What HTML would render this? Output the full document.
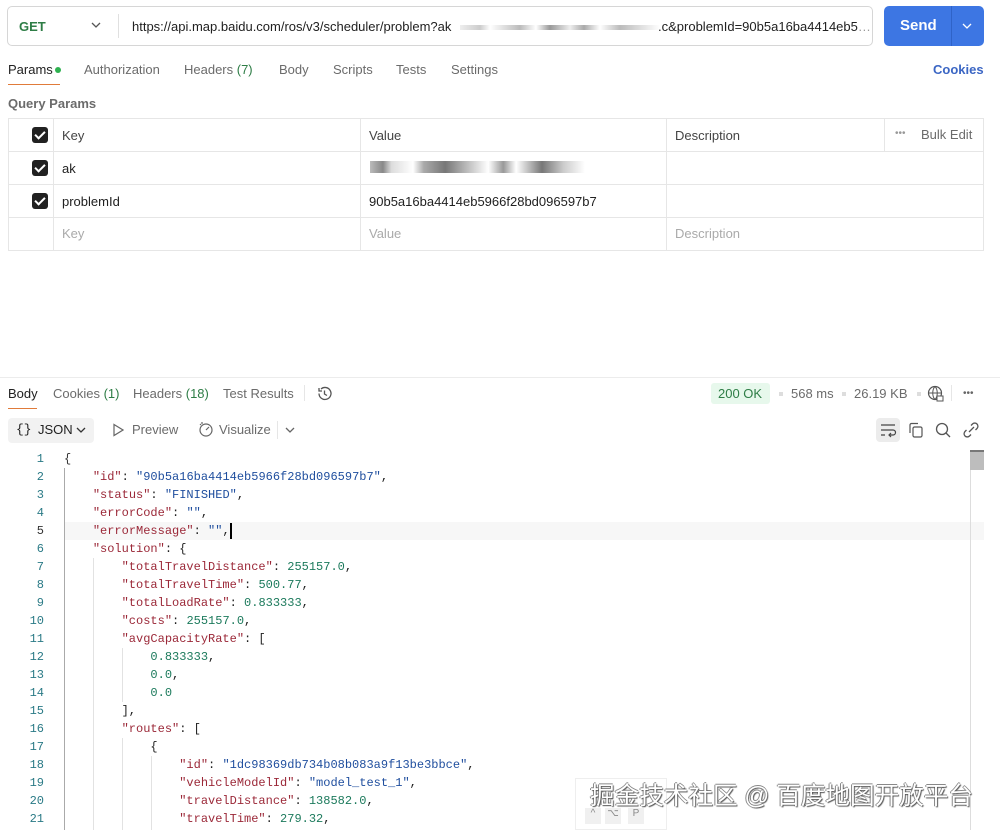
<!DOCTYPE html>
<html><head><meta charset="utf-8"><style>
*{margin:0;padding:0;box-sizing:border-box}
body{width:1000px;height:830px;overflow:hidden;background:#fff;font-family:"Liberation Sans",sans-serif;font-size:13px;color:#212121;position:relative}
.a{position:absolute;white-space:nowrap}
.g{color:#6b6b6b}
.tabs span{position:absolute;top:62px;color:#6b6b6b}
.cb{position:absolute;left:32px;width:16px;height:16px;background:#212121;border-radius:3px}
.cb:after{content:"";position:absolute;left:5px;top:2px;width:4px;height:8px;border:solid #fff;border-width:0 2px 2px 0;transform:rotate(45deg)}
.code{position:absolute;left:0;top:450px;font-family:"Liberation Mono",monospace;font-size:12px;line-height:18px}
.ln{position:absolute;left:0;width:44px;text-align:right;color:#2a7a86}
.l{position:absolute;left:64px;white-space:pre}
.k{color:#9b2838}.s{color:#1f4e9e}.n{color:#1c7a5c}.p{color:#333}
.guide{position:absolute;width:1px;background:#e2e2e2}
</style></head><body>
<div class="a" style="left:7px;top:6px;width:866px;height:40px;border:1px solid #d6d6d6;border-radius:5px"></div>
<div class="a" style="left:19px;top:19px;font-weight:bold;color:#2e7d46;font-size:13px">GET</div>
<svg class="a" style="left:90px;top:21px" width="12" height="8"><path d="M2 2l4 4 4-4" fill="none" stroke="#555" stroke-width="1.3"/></svg>
<div class="a" style="left:118px;top:14px;width:1px;height:24px;background:#e0e0e0"></div>
<div class="a" style="left:132px;top:19px;color:#212121">https://api.map.baidu.com/ros/v3/scheduler/problem?ak</div>
<div class="a" style="left:460px;top:25px;width:200px;height:5px;background:linear-gradient(90deg,#eee 0,#ccc 10%,#fff 15%,#bbb 30%,#fff 38%,#999 45%,#eee 55%,#aaa 62%,#fff 70%,#bbb 80%,#fff 100%)"></div>
<div class="a" style="left:658px;top:19px">.c&amp;problemId=90b5a16ba4414eb5<span style="color:#999">…</span></div>
<div class="a" style="left:884px;top:6px;width:100px;height:40px;background:#3d76e3;border-radius:5px"></div>
<div class="a" style="left:951px;top:6px;width:1px;height:40px;background:#2f63c8"></div>
<div class="a" style="left:900px;top:17px;color:#fff;font-weight:bold;font-size:15px">Send</div>
<svg class="a" style="left:961px;top:22px" width="12" height="8"><path d="M2 2l4 4 4-4" fill="none" stroke="#fff" stroke-width="1.3"/></svg>
<div class="tabs">
<span style="left:8px;color:#212121">Params</span>
<span style="left:84px">Authorization</span>
<span style="left:184px">Headers <span style="position:static;color:#2e7d46">(7)</span></span>
<span style="left:279px">Body</span>
<span style="left:333px">Scripts</span>
<span style="left:396px">Tests</span>
<span style="left:451px">Settings</span>
<span style="left:933px;color:#3b66c4;font-weight:bold">Cookies</span>
</div>
<div class="a" style="left:55px;top:67px;width:6px;height:6px;border-radius:50%;background:#2eb150"></div>
<div class="a" style="left:8px;top:84px;width:52px;height:1px;background:#e07b3a"></div>
<div class="a" style="left:8px;top:96px;font-weight:bold;color:#6b6b6b">Query Params</div>
<div class="a" style="left:8px;top:118px;width:976px;height:133px;border:1px solid #e6e6e6"></div>
<div class="a" style="left:8px;top:151px;width:976px;height:1px;background:#e6e6e6"></div>
<div class="a" style="left:8px;top:184px;width:976px;height:1px;background:#e6e6e6"></div>
<div class="a" style="left:8px;top:217px;width:976px;height:1px;background:#e6e6e6"></div>
<div class="a" style="left:53px;top:118px;width:1px;height:133px;background:#e6e6e6"></div>
<div class="a" style="left:360px;top:118px;width:1px;height:133px;background:#e6e6e6"></div>
<div class="a" style="left:666px;top:118px;width:1px;height:133px;background:#e6e6e6"></div>
<div class="a" style="left:884px;top:118px;width:1px;height:33px;background:#e6e6e6"></div>
<div class="cb" style="top:127px"></div><div class="cb" style="top:160px"></div><div class="cb" style="top:193px"></div>
<div class="a" style="left:62px;top:128px;color:#444">Key</div>
<div class="a" style="left:369px;top:128px;color:#444">Value</div>
<div class="a" style="left:675px;top:128px;color:#444">Description</div>
<div class="a" style="left:895px;top:128px;color:#999;font-size:10px">•••</div>
<div class="a" style="left:921px;top:127px;color:#6b6b6b">Bulk Edit</div>
<div class="a" style="left:62px;top:161px">ak</div>
<div class="a" style="left:370px;top:161px;width:215px;height:12px;background:linear-gradient(90deg,#bbb 0,#888 6%,#ddd 10%,#fff 20%,#aaa 25%,#777 35%,#bbb 45%,#fff 55%,#999 62%,#fff 68%,#777 80%,#ccc 90%,#fff 100%)"></div>
<div class="a" style="left:62px;top:194px">problemId</div>
<div class="a" style="left:369px;top:194px">90b5a16ba4414eb5966f28bd096597b7</div>
<div class="a" style="left:62px;top:226px;color:#aaa">Key</div>
<div class="a" style="left:369px;top:226px;color:#aaa">Value</div>
<div class="a" style="left:675px;top:226px;color:#aaa">Description</div>
<div class="a" style="left:0;top:377px;width:1000px;height:1px;background:#ececec"></div>
<div class="a" style="left:8px;top:386px">Body</div>
<div class="a" style="left:8px;top:408px;width:29px;height:1px;background:#e07b3a"></div>
<div class="a g" style="left:53px;top:386px">Cookies <span style="color:#2e7d46">(1)</span></div>
<div class="a g" style="left:133px;top:386px">Headers <span style="color:#2e7d46">(18)</span></div>
<div class="a g" style="left:223px;top:386px">Test Results</div>
<div class="a" style="left:304px;top:385px;width:1px;height:16px;background:#e6e6e6"></div>
<svg class="a" style="left:316px;top:385px" width="17" height="17"><path d="M3 8.5a6 6 0 1 0 2-4.5M3 3v3h3M8.5 5.5v3.5l2.5 1.5" fill="none" stroke="#555" stroke-width="1.3"/></svg>
<div class="a" style="left:711px;top:383px;width:59px;height:21px;background:#e7f8ec;border-radius:3px"></div>
<div class="a" style="left:718px;top:386px;color:#2e7d46">200 OK</div>
<div class="a" style="left:779px;top:392px;width:4px;height:4px;background:#ddd"></div>
<div class="a g" style="left:791px;top:386px">568 ms</div>
<div class="a" style="left:842px;top:392px;width:4px;height:4px;background:#ddd"></div>
<div class="a g" style="left:854px;top:386px">26.19 KB</div>
<div class="a" style="left:917px;top:392px;width:4px;height:4px;background:#ddd"></div>
<svg class="a" style="left:927px;top:385px" width="18" height="18"><circle cx="8" cy="8" r="6.5" fill="none" stroke="#555" stroke-width="1.2"/><path d="M1.5 8h13M8 1.5c-3 3-3 10 0 13M8 1.5c3 3 3 10 0 13" fill="none" stroke="#555" stroke-width="1"/><rect x="10" y="11" width="6" height="5" fill="#fff" stroke="#555"/></svg>
<div class="a" style="left:951px;top:385px;width:1px;height:16px;background:#e6e6e6"></div>
<div class="a" style="left:963px;top:388px;color:#666;font-size:10px">•••</div>
<div class="a" style="left:8px;top:418px;width:86px;height:25px;background:#f2f2f2;border-radius:4px"></div>
<div class="a" style="left:16px;top:422px;font-family:'Liberation Mono',monospace">{}</div>
<div class="a" style="left:38px;top:422px">JSON</div>
<svg class="a" style="left:76px;top:427px" width="10" height="7"><path d="M1 1l4 4 4-4" fill="none" stroke="#333" stroke-width="1.3"/></svg>
<svg class="a" style="left:112px;top:423px" width="12" height="14"><path d="M2 1.5l9 5.5-9 5.5z" fill="none" stroke="#666" stroke-width="1.2"/></svg>
<div class="a g" style="left:132px;top:422px">Preview</div>
<svg class="a" style="left:197px;top:421px" width="17" height="17"><circle cx="9" cy="9" r="6" fill="none" stroke="#666" stroke-width="1.2"/><path d="M9 9l3-3M3 3l1 1M5 1v2" stroke="#666" stroke-width="1.2"/></svg>
<div class="a g" style="left:219px;top:422px">Visualize</div>
<div class="a" style="left:277px;top:421px;width:1px;height:18px;background:#e6e6e6"></div>
<svg class="a" style="left:285px;top:427px" width="10" height="7"><path d="M1 1l4 4 4-4" fill="none" stroke="#666" stroke-width="1.3"/></svg>
<div class="a" style="left:876px;top:418px;width:24px;height:24px;background:#ececec;border-radius:4px"></div>
<svg class="a" style="left:879px;top:421px" width="18" height="18"><path d="M2 4h14M2 9h12a2.5 2.5 0 0 1 0 5h-4M12 12l-2 2 2 2M2 14h4" fill="none" stroke="#444" stroke-width="1.2"/></svg>
<svg class="a" style="left:907px;top:421px" width="18" height="18"><rect x="6" y="6" width="9" height="10" rx="1.5" fill="none" stroke="#555" stroke-width="1.2"/><path d="M3 12V4a1.5 1.5 0 0 1 1.5-1.5H11" fill="none" stroke="#555" stroke-width="1.2"/></svg>
<svg class="a" style="left:934px;top:421px" width="18" height="18"><circle cx="8" cy="8" r="5.5" fill="none" stroke="#555" stroke-width="1.3"/><path d="M12 12l4 4" stroke="#555" stroke-width="1.3"/></svg>
<svg class="a" style="left:962px;top:421px" width="18" height="18"><path d="M7 11l5-5M9 4.5l1.5-1.5a3 3 0 0 1 4.5 4.5L13.5 9M4.5 9L3 10.5a3 3 0 0 0 4.5 4.5L9 13.5" fill="none" stroke="#555" stroke-width="1.3"/></svg>
<div class="a" style="left:64px;top:522px;width:920px;height:18px;background:#f7f7f7"></div>
<div class="a" style="left:970px;top:450px;width:14px;height:380px;border-left:1px solid #ddd"></div>
<div class="a" style="left:970px;top:450px;width:14px;height:20px;background:#bdbdbd;border-top:2px solid #777"></div>
<div class="guide" style="left:64px;top:468px;height:362px;background:#aaa"></div>
<div class="guide" style="left:93px;top:558px;height:272px"></div>
<div class="guide" style="left:122px;top:648px;height:54px"></div>
<div class="guide" style="left:122px;top:738px;height:92px"></div>
<div class="guide" style="left:151px;top:756px;height:74px"></div>
<div class="code">
<div class="ln" style="top:0">1</div><div class="l" style="top:0"><span class="p">{</span></div>
<div class="ln" style="top:18px">2</div><div class="l" style="top:18px">    <span class="k">"id"</span>: <span class="s">"90b5a16ba4414eb5966f28bd096597b7"</span>,</div>
<div class="ln" style="top:36px">3</div><div class="l" style="top:36px">    <span class="k">"status"</span>: <span class="s">"FINISHED"</span>,</div>
<div class="ln" style="top:54px">4</div><div class="l" style="top:54px">    <span class="k">"errorCode"</span>: <span class="s">""</span>,</div>
<div class="ln" style="top:72px;color:#333">5</div><div class="l" style="top:72px">    <span class="k">"errorMessage"</span>: <span class="s">""</span>,<span style="display:inline-block;width:2px;height:16px;background:#000;vertical-align:middle"></span></div>
<div class="ln" style="top:90px">6</div><div class="l" style="top:90px">    <span class="k">"solution"</span>: {</div>
<div class="ln" style="top:108px">7</div><div class="l" style="top:108px">        <span class="k">"totalTravelDistance"</span>: <span class="n">255157.0</span>,</div>
<div class="ln" style="top:126px">8</div><div class="l" style="top:126px">        <span class="k">"totalTravelTime"</span>: <span class="n">500.77</span>,</div>
<div class="ln" style="top:144px">9</div><div class="l" style="top:144px">        <span class="k">"totalLoadRate"</span>: <span class="n">0.833333</span>,</div>
<div class="ln" style="top:162px">10</div><div class="l" style="top:162px">        <span class="k">"costs"</span>: <span class="n">255157.0</span>,</div>
<div class="ln" style="top:180px">11</div><div class="l" style="top:180px">        <span class="k">"avgCapacityRate"</span>: [</div>
<div class="ln" style="top:198px">12</div><div class="l" style="top:198px">            <span class="n">0.833333</span>,</div>
<div class="ln" style="top:216px">13</div><div class="l" style="top:216px">            <span class="n">0.0</span>,</div>
<div class="ln" style="top:234px">14</div><div class="l" style="top:234px">            <span class="n">0.0</span></div>
<div class="ln" style="top:252px">15</div><div class="l" style="top:252px">        ],</div>
<div class="ln" style="top:270px">16</div><div class="l" style="top:270px">        <span class="k">"routes"</span>: [</div>
<div class="ln" style="top:288px">17</div><div class="l" style="top:288px">            {</div>
<div class="ln" style="top:306px">18</div><div class="l" style="top:306px">                <span class="k">"id"</span>: <span class="s">"1dc98369db734b08b083a9f13be3bbce"</span>,</div>
<div class="ln" style="top:324px">19</div><div class="l" style="top:324px">                <span class="k">"vehicleModelId"</span>: <span class="s">"model_test_1"</span>,</div>
<div class="ln" style="top:342px">20</div><div class="l" style="top:342px">                <span class="k">"travelDistance"</span>: <span class="n">138582.0</span>,</div>
<div class="ln" style="top:360px">21</div><div class="l" style="top:360px">                <span class="k">"travelTime"</span>: <span class="n">279.32</span>,</div>
</div>
<div class="a" style="left:575px;top:778px;width:92px;height:52px;background:#fff;border:1px solid #eee"></div>
<div class="a" style="left:585px;top:808px;width:16px;height:16px;background:#f0f0f0;font-size:10px;color:#888;text-align:center">^</div>
<div class="a" style="left:605px;top:808px;width:16px;height:16px;background:#f0f0f0;font-size:10px;color:#888;text-align:center">⌥</div>
<div class="a" style="left:628px;top:808px;width:16px;height:16px;background:#f0f0f0;font-size:10px;color:#888;text-align:center">P</div>
<div class="a" style="left:590px;top:776px;font-family:'Liberation Sans','Noto Sans CJK SC',sans-serif;font-size:24.6px;color:#fff;text-shadow:1px 1px 1px #555,-1px 0 0 #888,0 -1px 0 #888">掘金技术社区 @ 百度地图开放平台</div>
</body></html>
